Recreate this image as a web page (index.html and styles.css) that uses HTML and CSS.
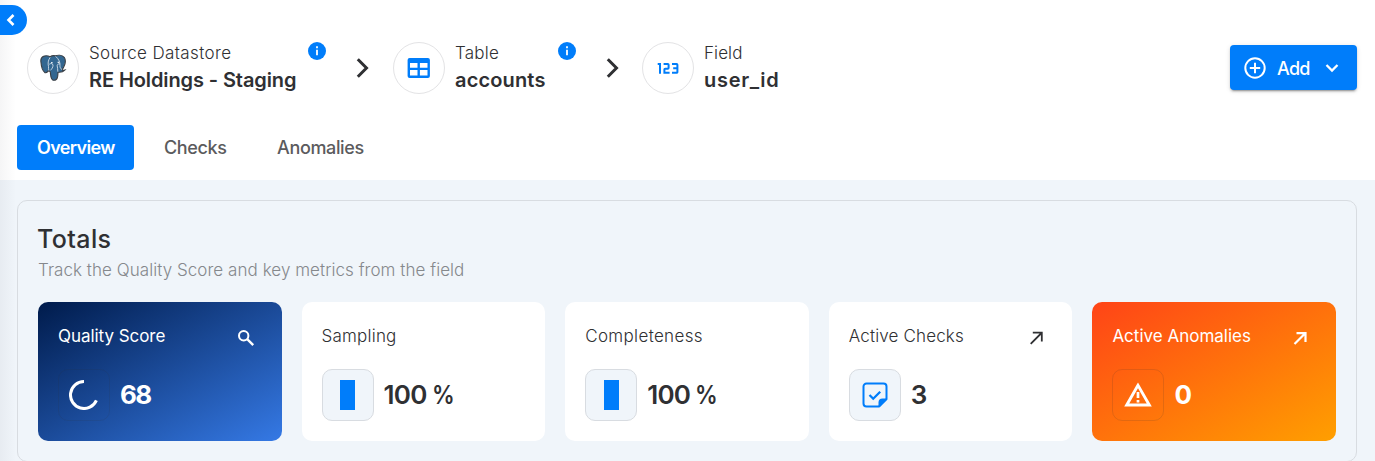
FILE: index.html
```html
<!DOCTYPE html>
<html lang="en">
<head>
<meta charset="utf-8">
<title>user_id</title>
<link rel="stylesheet" href="styles.css">
</head>
<body>
<div class="edge-shadow"></div>
<button class="collapse" aria-label="Collapse"><svg width="24" height="24" viewBox="0 0 24 24"><path d="M13.500 7 8.500 12l5 5" fill="none" stroke="#fff" stroke-width="2.600"/></svg></button>
<header class="header">
  <div class="top">
    <nav class="crumbs">
      <div class="crumb">
        <div class="avatar"><svg width="28" height="28" viewBox="0 0 30 30">
          <path d="M12 3C7 0.5 1.500 2.500 2 8c.4 5 2.200 10.500 4.500 12 1.300.8 2.500-.8 4-2.200L12 19c.6 2.500.2 8 3 9 2.800.6 4.600-1 5-4l.4-4.500c2.600.3 5.500-.3 7.200-2.300-1.500.5-2.600.2-2.900-.3C28 12 29 6.500 27 3.500 24.500.8 20 1 17.500 2 15.500 1.500 13.500 1.800 12 3Z" fill="#336791" stroke="#3a3f45" stroke-width="1.200"/>
          <path d="M12 3.500C9.500 7 9.500 10 10.200 13.500c.3 1.500-.3 3 .3 4.200M17.800 2.500c3.500 3 5 6.500 4.700 10-.2 2 .6 3 2 4.200M11 11c1.500-1.200 3.800-1 4 1 .1 2.500-1.500 4-2.700 5.500M22.500 10.500c-2 0-3 .5-3 2 0 2.500 1 4 .7 6.500" fill="none" stroke="#dbe5ee" stroke-width=".9"/>
          <path d="M13 9.300h1.500M20 9h1.300" stroke="#fff" stroke-width="1.300"/>
        </svg></div>
        <div class="names"><span class="kind k1">Source Datastore</span><strong class="name n1">RE Holdings - Staging</strong></div>
        <svg class="info" width="18" height="18" viewBox="0 0 18 18"><circle cx="9" cy="9" r="9" fill="#007dfa"/><path d="M9 4.300v2M9 7.700v5.500" stroke="#fff" stroke-width="1.800"/></svg>
      </div>
      <svg class="sep" width="14" height="20" viewBox="0 0 14 20"><path d="m1.800 1.300 8.700 8.700-8.700 8.700" fill="none" stroke="#2f3033" stroke-width="3"/></svg>
      <div class="crumb crumb-table">
        <div class="avatar"><svg width="24" height="20" viewBox="0 0 24 20"><path fill="#007dfa" fill-rule="evenodd" d="M2.600 0h18.300a2 2 0 0 1 2 2v16a2 2 0 0 1-2 2H2.600a2 2 0 0 1-2-2V2a2 2 0 0 1 2-2ZM3 5v4.700h7.500V5ZM12.900 5v4.700h7.600V5ZM3 12v5.500h7.500V12ZM12.900 12v5.500h7.600V12Z"/></svg></div>
        <div class="names"><span class="kind k2">Table</span><strong class="name n2">accounts</strong></div>
        <svg class="info" width="18" height="18" viewBox="0 0 18 18"><circle cx="9" cy="9" r="9" fill="#007dfa"/><path d="M9 4.300v2M9 7.700v5.500" stroke="#fff" stroke-width="1.800"/></svg>
      </div>
      <svg class="sep" width="14" height="20" viewBox="0 0 14 20"><path d="m1.800 1.300 8.700 8.700-8.700 8.700" fill="none" stroke="#2f3033" stroke-width="3"/></svg>
      <div class="crumb crumb-field">
        <div class="avatar"><svg width="24" height="24" viewBox="0 0 24 24"><path d="M1.700 8h2.300v9.700M7.600 8h4.200a.8.800 0 0 1 .8.800v3.100a.8.800 0 0 1-.8.800H9.200a.8.800 0 0 0-.8.800v3.200h5.200M16 8h4.600a.8.800 0 0 1 .8.800v7.100a.8.800 0 0 1-.8.800H16M17.200 12.300h4" fill="none" stroke="#007dfa" stroke-width="2"/></svg></div>
        <div class="names"><span class="kind k3">Field</span><strong class="name n3">user_id</strong></div>
      </div>
    </nav>
    <button class="add">
      <svg width="22" height="22" viewBox="0 0 22 22" fill="none" stroke="#fff" stroke-width="2"><circle cx="11" cy="11" r="9.700"/><path d="M11 5.800v10.400M5.800 11h10.400"/></svg>
      <span>Add</span>
      <svg width="14" height="10" viewBox="0 0 14 10"><path d="m1.500 2 5.500 5.500L12.500 2" fill="none" stroke="#fff" stroke-width="2.300"/></svg>
    </button>
  </div>
  <div class="tabs">
    <a class="tab active"><span>Overview</span></a>
    <a class="tab t2"><span>Checks</span></a>
    <a class="tab t3"><span>Anomalies</span></a>
  </div>
</header>
<main class="main">
  <section class="panel">
    <h2 class="title">Totals</h2>
    <p class="sub">Track the Quality Score and key metrics from the field</p>
    <div class="cards">
      <article class="card score">
        <div class="head"><span class="label l1">Quality Score</span><svg width="22" height="22" viewBox="0 0 22 22" fill="none" stroke="#fff" stroke-width="2"><circle cx="8.700" cy="8.700" r="4.700"/><path d="m12.200 12.200 6 6" stroke-width="2.400"/></svg></div>
        <div class="stat"><div class="tile"><svg width="30" height="30" viewBox="0 0 30 30"><path d="M15 1.500A13.500 13.500 0 1 0 27.400 20.300" fill="none" stroke="#fff" stroke-width="3"/></svg></div><b class="num">68</b></div>
      </article>
      <article class="card">
        <div class="head"><span class="label l2">Sampling</span></div>
        <div class="stat"><div class="tile"><div class="level"></div></div><b class="num">100<i>%</i></b></div>
      </article>
      <article class="card">
        <div class="head"><span class="label l3">Completeness</span></div>
        <div class="stat"><div class="tile"><div class="level"></div></div><b class="num">100<i>%</i></b></div>
      </article>
      <article class="card">
        <div class="head"><span class="label l4">Active Checks</span><svg width="22" height="22" viewBox="0 0 22 22"><path d="M5.700 16.800 16.500 6M7.800 5.700h9v8.800" fill="none" stroke="#2f3033" stroke-width="1.800"/></svg></div>
        <div class="stat"><div class="tile"><svg width="28" height="28" viewBox="0 0 28 28"><path d="M18 25.500H5.500a3 3 0 0 1-3-3v-17a3 3 0 0 1 3-3h17a3 3 0 0 1 3 3V18Z" fill="none" stroke="#007dfa" stroke-width="2"/><path d="M17.500 26v-4.500a4 4 0 0 1 4-4H26v1.300L18.800 26Z" fill="#007dfa"/><path d="m8.500 14 3.700 3.700 7-7" fill="none" stroke="#007dfa" stroke-width="2.300"/></svg></div><b class="num">3</b></div>
      </article>
      <article class="card anomalies">
        <div class="head"><span class="label l5">Active Anomalies</span><svg width="22" height="22" viewBox="0 0 22 22"><path d="M5.500 17 16 6.500M7.500 6.100h9v9" fill="none" stroke="#fff" stroke-width="2.200"/></svg></div>
        <div class="stat"><div class="tile"><svg width="28" height="26" viewBox="0 0 28 26"><path d="M14 3.300 2.700 23h22.600Z" fill="none" stroke="#fff" stroke-width="2.900"/><path d="M14 10v6M14 18v2.500" stroke="#fff" stroke-width="2.700"/></svg></div><b class="num">0</b></div>
      </article>
    </div>
  </section>
</main>
</body>
</html>
```
FILE: styles.css
```css
* { box-sizing: border-box; }
body { margin: 0; width: 1375px; height: 461px; overflow: hidden; position: relative; background: #f0f5fa; color: #2f3033; font-family: Inter, "Liberation Sans", sans-serif; }
svg { display: block; flex: none; }
button { border: 0; padding: 0; font: inherit; color: inherit; }
.edge-shadow { position: absolute; z-index: 2; left: 0; top: 0; width: 16px; height: 461px; background: linear-gradient(90deg, rgba(30,30,50,.045), transparent); }
.collapse { position: absolute; z-index: 3; left: 0; top: 5px; width: 27px; height: 30px; border-radius: 0 15px 15px 0; background: #007dfa; }
.header { height: 180px; padding: 41px 18px 0 17px; background: #fff; }
.top { display: flex; justify-content: space-between; height: 54px; padding-left: 10px; }
.crumbs { display: flex; align-items: flex-start; }
.crumb { display: flex; width: 299px; }
.crumb-table { width: 183px; }
.crumb-field { margin-left: -1px; }
.crumb + .sep { margin: 17px 23px 0 30px; }
.avatar { flex: none; display: grid; place-items: center; width: 52px; height: 52px; margin-top: 1px; border: 1px solid #e3e3e5; border-radius: 50%; }
.names { display: flex; flex-direction: column; flex: none; margin-left: 10px; white-space: nowrap; }
.kind { font-size: 17px; line-height: 24px; font-weight: 300; }
.name { font-size: 20px; line-height: 30px; font-weight: 600; }
.k1 { letter-spacing: .38px; }
.k2 { letter-spacing: .2px; }
.k3 { letter-spacing: .1px; }
.n1 { letter-spacing: -.1px; }
.n2 { letter-spacing: .15px; }
.n3 { letter-spacing: .7px; }
.info { margin: 1px 0 0 auto; }
.add { display: flex; align-items: center; width: 127px; height: 45px; margin-top: 4px; padding-left: 14px; border-radius: 4px; color: #fff; background: #007dfa; font-size: 18px; font-weight: 500; letter-spacing: -.7px; box-shadow: 0 3px 1px -2px rgba(0,0,0,.2), 0 2px 2px rgba(0,0,0,.14), 0 1px 5px rgba(0,0,0,.12); }
.add span { width: 33px; margin: 2px 15px 0 11px; text-align: left; }
.tabs { display: flex; margin-top: 30px; font-size: 18px; font-weight: 500; color: #5b5b5d; }
.tab { height: 45px; padding: 0 20px; line-height: 45px; border-radius: 4px; white-space: nowrap; letter-spacing: -.35px; }
.active { width: 117px; color: #fff; background: #007dfa; font-weight: 600; letter-spacing: -.65px; }
.t2 { width: 103px; margin: 0 10px 0 10px; }
.main { padding: 20px 18px 0 17px; }
.panel { height: 262px; padding: 20px; border: 1px solid #d8dce1; border-radius: 10px; }
.title { margin: 0 0 0 -1px; font-size: 25px; line-height: 36px; font-weight: 500; letter-spacing: .4px; }
.sub { margin: 0; font-size: 17px; line-height: 26px; font-weight: 300; letter-spacing: .05px; color: #85888c; white-space: nowrap; }
.cards { display: grid; grid-template-columns: repeat(5, 1fr); gap: 20px; margin-top: 19px; }
.card { height: 139px; padding: 20px; border-radius: 10px; background: #fff; }
.head { display: flex; justify-content: space-between; height: 47px; padding-right: 5px; }
.head svg { margin-top: 5px; }
.label { font-size: 17px; line-height: 28px; font-weight: 300; white-space: nowrap; }
.l1 { letter-spacing: -.05px; }
.l2 { letter-spacing: .2px; }
.l3 { letter-spacing: .35px; }
.l4 { letter-spacing: .15px; }
.stat { display: flex; align-items: center; gap: 10px; height: 52px; }
.tile { display: grid; place-items: center; width: 52px; height: 52px; border: 1px solid #d8dce1; border-radius: 10px; background: #f0f5fa; }
.level { width: 15px; height: 30px; background: #007dfa; }
.num { font-size: 26px; line-height: 54px; font-weight: 600; letter-spacing: -.8px; white-space: nowrap; }
.num i { display: inline-block; font-style: normal; margin-left: 5px; transform: scaleX(.87); transform-origin: 0 50%; }
.score { background: linear-gradient(151deg, #001b4b, #3579e5); color: #fff; }
.anomalies { background: linear-gradient(151deg, #ff4417, #ff9f00); color: #fff; }
.score .label, .anomalies .label { font-weight: 400; }
.score .num, .anomalies .num { font-weight: 700; letter-spacing: -1.7px; }
.score .tile { background: transparent; border-color: rgba(48,48,48,.12); }
.anomalies .tile { background: transparent; border-color: rgba(48,48,48,.14); }
```
